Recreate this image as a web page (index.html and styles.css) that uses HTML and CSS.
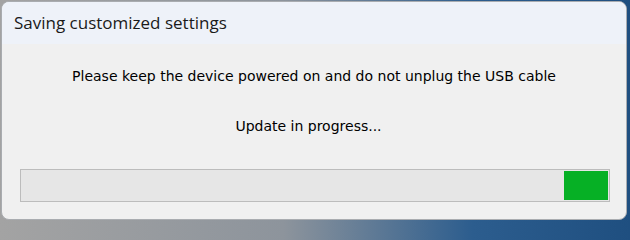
FILE: index.html
```html
<!DOCTYPE html>
<html>
<head>
<meta charset="utf-8">
<link rel="stylesheet" href="styles.css">
</head>
<body>
<div class="window">
  <div class="titlebar">Saving customized settings</div>
  <div class="content">
    <p class="msg">Please keep the device powered on and do not unplug the USB cable</p>
    <p class="status">Update in progress...</p>
    <div class="progress">
      <div class="chunk"></div>
    </div>
  </div>
</div>
</body>
</html>
```
FILE: styles.css
```css
html, body {
  margin: 0;
  padding: 0;
  width: 630px;
  height: 223px;
  overflow: hidden;
}
body {
  background: linear-gradient(90deg, #a3a3a3 0%, #8d949c 45%, #2c5d8e 75%, #1f4f80 100%);
  font-family: "Open Sans", "Noto Sans", sans-serif;
}
.window {
  box-sizing: border-box;
  margin: 1px 3px 0 1px;
  height: 219px;
  border: 1px solid #a9acb0;
  border-radius: 8px;
  background: #f0f0f0;
  overflow: hidden;
  display: flex;
  flex-direction: column;
}
.titlebar {
  height: 42px;
  background: #eef2f9;
  padding-left: 12px;
  font-size: 17px;
  line-height: 42px;
  color: #1a1a1a;
}
.content {
  flex: 1;
  display: flex;
  flex-direction: column;
  align-items: center;
}
.msg {
  margin: 20px 0 0 0;
  font-family: "DejaVu Sans", sans-serif;
  font-size: 14px;
  line-height: 24px;
  color: #000;
}
.status {
  margin: 26px 11px 0 0;
  font-family: "DejaVu Sans", sans-serif;
  font-size: 14px;
  line-height: 24px;
  color: #000;
}
.progress {
  box-sizing: border-box;
  align-self: flex-start;
  margin: 31px 0 0 18px;
  width: 590px;
  height: 33px;
  border: 1px solid #bcbcbc;
  background: #e6e6e6;
  display: flex;
  justify-content: flex-end;
  padding: 1px;
}
.chunk {
  width: 44px;
  height: 100%;
  background: #06b025;
}
```
